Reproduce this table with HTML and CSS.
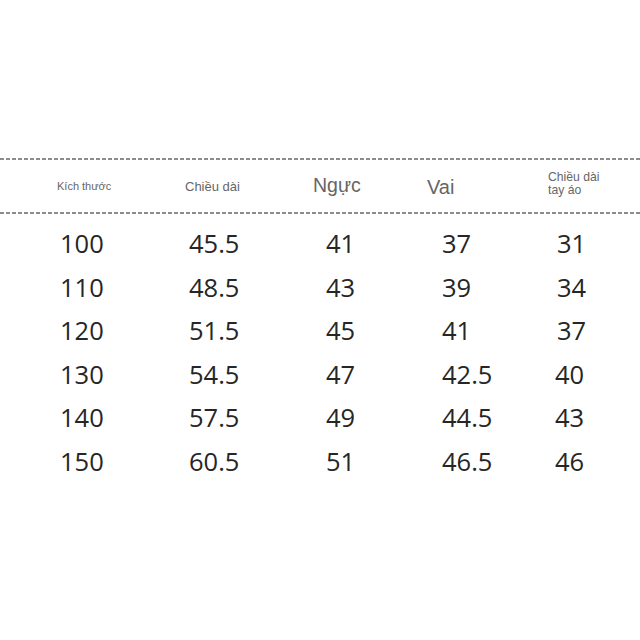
FILE: index.html
```html
<!DOCTYPE html>
<html lang="vi">
<head>
<meta charset="utf-8">
<title>Bảng kích thước</title>
<link rel="stylesheet" href="styles.css">
</head>
<body>
<div class="sheet">
  <div class="dash"></div>
  <div class="head">
    <div class="h h1">Kích thước</div>
    <div class="h h2">Chiều dài</div>
    <div class="h h3">Ngực</div>
    <div class="h h4">Vai</div>
    <div class="h h5">Chiều dài<br>tay áo</div>
  </div>
  <div class="dash"></div>
  <div class="rows">
    <div>100</div><div>45.5</div><div>41</div><div>37</div><div>31</div>
    <div>110</div><div>48.5</div><div>43</div><div>39</div><div>34</div>
    <div>120</div><div>51.5</div><div>45</div><div>41</div><div>37</div>
    <div>130</div><div>54.5</div><div>47</div><div>42.5</div><div class="nudge">40</div>
    <div>140</div><div>57.5</div><div>49</div><div>44.5</div><div class="nudge">43</div>
    <div>150</div><div>60.5</div><div>51</div><div>46.5</div><div class="nudge">46</div>
  </div>
</div>
</body>
</html>
```
FILE: styles.css
```css
html, body {
  margin: 0;
  padding: 0;
  background: #ffffff;
}

.sheet {
  width: 640px;
  height: 640px;
  padding-top: 158px;
  box-sizing: border-box;
}

.dash {
  height: 2px;
  background: repeating-linear-gradient(90deg, #8c8c8c 0 4px, transparent 4px 6px);
}

.head {
  height: 52px;
  display: grid;
  grid-template-columns: 128px 128px 114px 121px auto;
  align-items: center;
  padding-left: 57px;
  font-family: "Liberation Sans", Arial, sans-serif;
  color: #666666;
}

.h1 { font-size: 11px; }
.h2 { font-size: 13px; }
.h3 { font-size: 19.5px; margin-bottom: 2px; }
.h4 { font-size: 20px; padding-top: 3px; }
.h5 { font-size: 12.2px; line-height: 13px; margin-bottom: 4px; }

.rows {
  display: grid;
  grid-template-columns: 129px 137px 116px 115px auto;
  grid-auto-rows: 43.5px;
  padding-top: 8px;
  padding-left: 60px;
  font-family: "Open Sans", "DejaVu Sans", sans-serif;
  font-size: 25.5px;
  line-height: 43.5px;
  color: #262626;
}

.nudge { margin-left: -2px; }
```
